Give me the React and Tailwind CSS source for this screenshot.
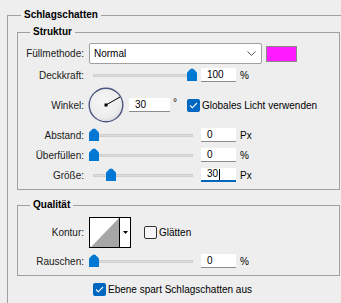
import React from "react";

function Slider({ value }) {
  const left = Math.round((value * 98) / 100);
  return (
    <div className="relative w-[109px] h-[14px] shrink-0">
      <div className="absolute left-[4px] right-[5px] top-[6px] h-[3px] bg-[#dcdcdc] border border-[#cfcfcf]" />
      <svg
        className="absolute top-[0px]"
        style={{ left: left + "px" }}
        width="10"
        height="13"
        viewBox="0 0 10 13"
      >
        <path d="M0 4.5 L3.5 1 Q5 0 6.5 1 L10 4.5 V13 H0 Z" fill="#0078d4" />
      </svg>
    </div>
  );
}

function Field({ value, active, w = "w-[35px]" }) {
  return (
    <div
      className={
        "h-[14px] bg-white flex items-center pl-[6px] text-black shrink-0 " +
        w +
        (active ? " border-b-2 border-[#0067c0]" : " border-b border-[#8c8c8c]")
      }
    >
      <span className="leading-none">{value}</span>
      {active && <span className="w-px h-[11px] bg-black ml-[1px]" />}
    </div>
  );
}

function Check({ checked }) {
  return checked ? (
    <div className="w-[13px] h-[13px] rounded-[2px] bg-[#0067c0] flex items-center justify-center shrink-0">
      <svg width="9" height="7" viewBox="0 0 9 7">
        <path d="M1 3.5 L3.3 5.8 L8 1" stroke="white" strokeWidth="1.1" fill="none" />
      </svg>
    </div>
  ) : (
    <div className="w-[13px] h-[13px] rounded-[2px] bg-[#f6f6f6] border border-[#333] shrink-0" />
  );
}

function Label({ children }) {
  return <div className="w-[66px] text-right shrink-0 mr-[5px]">{children}</div>;
}

export default function App() {
  return (
    <div
      className="w-[341px] h-[303px] overflow-hidden bg-[#eeeeee] text-[10px] text-[#1a1a1a]"
      style={{ fontFamily: '"Liberation Sans", Arial, sans-serif' }}
    >
      <fieldset className="ml-[7px] mt-[8px] w-[360px] border border-[#a0a0a0] pl-[9px] pt-[3px] pb-[20px]">
        <legend className="ml-[4px] px-[3px] font-bold leading-[14px] text-black">
          Schlagschatten
        </legend>

        <fieldset className="w-[323px] border border-[#a0a0a0] pb-[7px]">
          <legend className="ml-[12px] px-[3px] font-bold leading-[14px] text-black">Struktur</legend>

          <div className="flex items-center mt-[4px] h-[21px]">
            <Label>Füllmethode:</Label>
            <div className="w-[173px] h-[21px] bg-white border border-[#a0a0a0] rounded-[2px] flex items-center justify-between pl-[4px] pr-[5px] text-black">
              <span>Normal</span>
              <svg width="9" height="5" viewBox="0 0 9 5">
                <path d="M0.5 0.5 L4.5 4.5 L8.5 0.5" stroke="#555" strokeWidth="1" fill="none" />
              </svg>
            </div>
            <div className="ml-[4px] w-[31px] h-[16px] bg-[#ff1aff] border border-[#8a8a8a]" />
          </div>

          <div className="flex items-center mt-[4px] h-[14px]">
            <Label>Deckkraft:</Label>
            <Slider value={100} />
            <div className="ml-[3px]">
              <Field value="100" />
            </div>
            <span className="ml-[4px] text-black">%</span>
          </div>

          <div className="flex items-center mt-[5px] h-[36px]">
            <Label>Winkel:</Label>
            <svg width="36" height="36" viewBox="0 0 36 36" className="shrink-0 -ml-[1px]">
              <defs>
                <radialGradient id="dg" cx="45%" cy="40%" r="60%">
                  <stop offset="0%" stopColor="#f7f7f7" />
                  <stop offset="80%" stopColor="#ececec" />
                  <stop offset="100%" stopColor="#d8d8de" />
                </radialGradient>
              </defs>
              <circle cx="18" cy="18" r="16.8" fill="url(#dg)" stroke="#4a5680" strokeWidth="1.4" />
              <line x1="18" y1="18" x2="32" y2="10" stroke="#000" strokeWidth="1" />
              <rect x="16.5" y="16.5" width="3" height="3" fill="#000" />
            </svg>
            <div className="ml-[5px]">
              <Field value="30" w="w-[41px]" />
            </div>
            <span className="ml-[3px] self-start mt-[11px] leading-none text-black">°</span>
            <div className="ml-[10px]">
              <Check checked />
            </div>
            <span className="ml-[2px] text-black">Globales Licht verwenden</span>
          </div>

          <div className="flex items-center mt-[5px] h-[14px]">
            <Label>Abstand:</Label>
            <Slider value={0} />
            <div className="ml-[3px]">
              <Field value="0" />
            </div>
            <span className="ml-[4px] text-black">Px</span>
          </div>

          <div className="flex items-center mt-[6px] h-[14px]">
            <Label>Überfüllen:</Label>
            <Slider value={0} />
            <div className="ml-[3px]">
              <Field value="0" />
            </div>
            <span className="ml-[4px] text-black">%</span>
          </div>

          <div className="flex items-center mt-[6px] h-[14px]">
            <Label>Größe:</Label>
            <Slider value={17} />
            <div className="ml-[3px]">
              <Field value="30" active />
            </div>
            <span className="ml-[4px] text-black">Px</span>
          </div>
        </fieldset>

        <fieldset className="mt-[8px] w-[323px] border border-[#a0a0a0] pb-[7px]">
          <legend className="ml-[12px] px-[3px] font-bold leading-[14px] text-black">Qualität</legend>

          <div className="flex items-center mt-[5px] h-[31px]">
            <Label>Kontur:</Label>
            <div className="w-[42px] h-[31px] border border-black bg-white flex shrink-0">
              <svg width="29" height="29" viewBox="0 0 29 29" className="shrink-0">
                <path d="M1 29 L29 0 V29 Z" fill="#a6a6a6" />
              </svg>
              <div className="w-px h-full bg-black" />
              <div className="flex-1 flex items-center justify-center">
                <svg width="5" height="3" viewBox="0 0 5 3">
                  <path d="M0 0 H5 L2.5 3 Z" fill="#000" />
                </svg>
              </div>
            </div>
            <div className="ml-[13px]">
              <Check />
            </div>
            <span className="ml-[2px] text-black">Glätten</span>
          </div>

          <div className="flex items-center mt-[6px] h-[14px]">
            <Label>Rauschen:</Label>
            <Slider value={0} />
            <div className="ml-[3px]">
              <Field value="0" />
            </div>
            <span className="ml-[4px] text-black">%</span>
          </div>
        </fieldset>

        <div className="flex items-center mt-[6px] ml-[76px]">
          <Check checked />
          <span className="ml-[2px] text-black">Ebene spart Schlagschatten aus</span>
        </div>
      </fieldset>
    </div>
  );
}
